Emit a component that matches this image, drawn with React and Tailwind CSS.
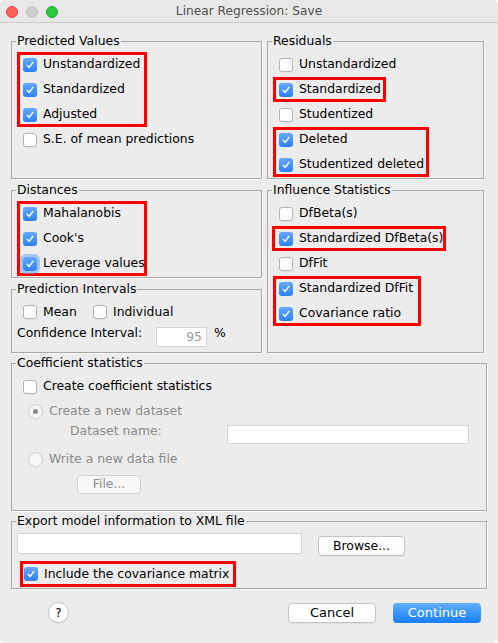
import React from "react";

function Check({ checked, focus }) {
  if (checked) {
    return (
      <span
        className={`flex h-[14px] w-[14px] shrink-0 items-center justify-center rounded-[3px] bg-[linear-gradient(180deg,#63a8fb,#2e80f2)] ${
          focus ? "shadow-[0_0_0_3px_rgba(110,165,240,0.55)]" : ""
        }`}
      >
        <svg width="10" height="10" viewBox="0 0 10 10">
          <path d="M2.2 5.3 L4.2 7.4 L7.9 2.4" fill="none" stroke="#fff" strokeWidth="1.4" strokeLinecap="round" strokeLinejoin="round" />
        </svg>
      </span>
    );
  }
  return (
    <span className="h-[14px] w-[14px] shrink-0 rounded-[3px] border border-[#b4b4b4] bg-white shadow-[0_1px_0_rgba(0,0,0,0.04)]" />
  );
}

function Row({ label, checked, focus }) {
  return (
    <div className="flex h-[25px] items-center gap-[6px] pl-[6px]">
      <Check checked={checked} focus={focus} />
      <span>{label}</span>
    </div>
  );
}

function Red({ className, children }) {
  return <div className={`shadow-[inset_0_0_0_3px_#ff0000] ${className}`}>{children}</div>;
}

function Group({ title, className = "", children }) {
  return (
    <div className={`border border-[#a8a8a8] shadow-[1px_1px_0_#fafafa] ${className}`}>
      <div className="-mt-[9px] ml-[4px] w-fit bg-[#ececec] px-[1px] leading-[16px]">{title}</div>
      {children}
    </div>
  );
}

function Radio({ selected }) {
  return (
    <span className="flex h-[15px] w-[15px] shrink-0 items-center justify-center rounded-full border border-[#cdcdcd] bg-[#f7f7f7]">
      {selected && <span className="h-[5px] w-[5px] rounded-full bg-[#8c8c8c]" />}
    </span>
  );
}

export default function App() {
  return (
    <div className="flex h-[643px] w-[498px] flex-col overflow-hidden rounded-[5px] bg-[#ececec] font-['DejaVu_Sans',sans-serif] text-[12.4px] text-black">
      {/* Title bar */}
      <div className="grid h-[23px] shrink-0 grid-cols-[1fr_auto_1fr] items-center border-b border-[#cacaca] bg-[#e8e8e8] pt-[1px]">
        <div className="flex items-center gap-[8px] pl-[6px]">
          <span className="h-[12px] w-[12px] rounded-full border border-[#e2463f] bg-[#fc605b]" />
          <span className="h-[12px] w-[12px] rounded-full border border-[#c2c2c2] bg-[#d0d0d0]" />
          <span className="h-[12px] w-[12px] rounded-full border border-[#24a934] bg-[#2bc840]" />
        </div>
        <div className="text-[12.2px] text-[#4e4e4e]">Linear Regression: Save</div>
        <div />
      </div>

      <div className="px-[11px] pt-[18px]">
        <div className="grid grid-cols-[251px_217px] gap-x-[5px] gap-y-[11px]">
          <Group title="Predicted Values">
            <div className="mt-[3px] px-[5px]">
              <Red className="w-[130px]">
                <Row label="Unstandardized" checked />
                <Row label="Standardized" checked />
                <Row label="Adjusted" checked />
              </Red>
              <Row label="S.E. of mean predictions" />
            </div>
          </Group>

          <Group title="Residuals">
            <div className="mt-[3px] px-[5px] pb-[1px]">
              <Row label="Unstandardized" />
              <Red className="w-[113px]">
                <Row label="Standardized" checked />
              </Red>
              <Row label="Studentized" />
              <Red className="w-[156px]">
                <Row label="Deleted" checked />
                <Row label="Studentized deleted" checked />
              </Red>
            </div>
          </Group>

          <div className="flex flex-col gap-[11px]">
            <Group title="Distances">
              <div className="mt-[3px] px-[5px] pb-[1px]">
                <Red className="w-[130px]">
                  <Row label="Mahalanobis" checked />
                  <Row label="Cook's" checked />
                  <Row label="Leverage values" checked focus />
                </Red>
              </div>
            </Group>
            <Group title="Prediction Intervals">
              <div className="mt-[3px] px-[5px] pb-[5px]">
                <div className="flex h-[25px] items-center pl-[6px]">
                  <div className="flex w-[70px] items-center gap-[6px]">
                    <Check />
                    <span>Mean</span>
                  </div>
                  <div className="flex items-center gap-[6px]">
                    <Check />
                    <span>Individual</span>
                  </div>
                </div>
                <div className="flex items-start">
                  <span className="w-[139px] leading-[16px]">Confidence Interval:</span>
                  <div className="mt-[2px] flex h-[20px] w-[51px] items-center justify-end border border-[#d3d3d3] bg-white pr-[4px] text-[#9a9a9a]">
                    95
                  </div>
                  <span className="ml-[7px] leading-[15px]">%</span>
                </div>
              </div>
            </Group>
          </div>

          <Group title="Influence Statistics">
            <div className="mt-[3px] px-[5px]">
              <Row label="DfBeta(s)" />
              <Red className="-ml-[1px] w-[174px] pl-[1px]">
                <Row label="Standardized DfBeta(s)" checked />
              </Red>
              <Row label="DfFit" />
              <Red className="w-[148px]">
                <Row label="Standardized DfFit" checked />
                <Row label="Covariance ratio" checked />
              </Red>
            </div>
          </Group>
        </div>

        <Group title="Coefficient statistics" className="mt-[10px]">
          <div className="mt-[3px] px-[5px] pb-[16px]">
            <Row label="Create coefficient statistics" />
            <div className="flex h-[25px] items-center gap-[6px] pl-[11px] text-[#8a8a8a]">
              <Radio selected />
              <span>Create a new dataset</span>
            </div>
            <div className="flex h-[20px] items-start pl-[53px]">
              <span className="w-[157px] leading-[14px] text-[#8a8a8a]">Dataset name:</span>
              <div className="mt-[1px] h-[19px] w-[242px] border border-[#d6d6d6] bg-white" />
            </div>
            <div className="mt-[3px] flex h-[25px] items-center gap-[6px] pl-[11px] text-[#8a8a8a]">
              <Radio />
              <span>Write a new data file</span>
            </div>
            <div className="ml-[60px] mt-[3px] flex h-[19px] w-[64px] items-center justify-center rounded-[4px] border border-[#d2d2d2] bg-[#f7f7f7] text-[#8d8d8d]">
              File...
            </div>
          </div>
        </Group>

        <Group title="Export model information to XML file" className="mt-[10px]">
          <div className="px-[5px] pb-[1px]">
            <div className="mt-[4px] flex items-start">
              <div className="h-[21px] w-[285px] border border-[#d3d3d3] bg-white" />
              <div className="ml-[16px] mt-[3px] flex h-[20px] w-[87px] items-center justify-center rounded-[4px] border border-[#c3c3c3] bg-white shadow-[0_1px_0_rgba(0,0,0,0.05)]">
                Browse...
              </div>
            </div>
            <Red className="ml-[3px] mt-[5px] flex h-[26px] w-[216px] items-center gap-[6px] pl-[4px]">
              <Check checked />
              <span>Include the covariance matrix</span>
            </Red>
          </div>
        </Group>
      </div>

      <div className="mt-[14px] flex items-start justify-between pl-[48px] pr-[17px]">
        <div className="-mt-[1px] flex h-[21px] w-[21px] items-center justify-center rounded-full border border-[#c4c4c4] bg-white text-[12px] shadow-[0_1px_0_rgba(0,0,0,0.06)]">
          ?
        </div>
        <div className="flex gap-[17px]">
          <div className="flex h-[20px] w-[88px] items-center justify-center rounded-[4px] border border-[#c2c2c2] bg-white text-[13px] shadow-[0_1px_0_rgba(0,0,0,0.05)]">
            Cancel
          </div>
          <div className="flex h-[20px] w-[88px] items-center justify-center rounded-[4px] bg-[linear-gradient(180deg,#62aefc,#167ef8)] text-[13px] text-white">
            Continue
          </div>
        </div>
      </div>
    </div>
  );
}
